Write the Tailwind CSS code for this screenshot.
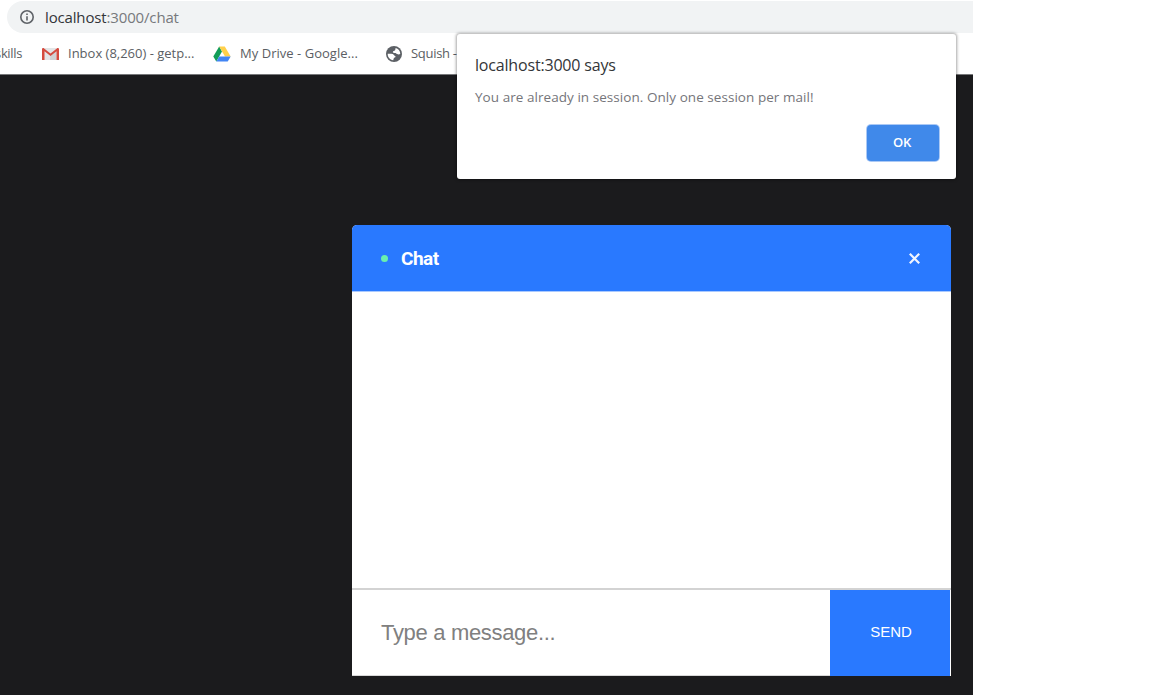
<!DOCTYPE html>
<html lang="en">
<head>
<meta charset="utf-8">
<title>Chat</title>
<script src="https://cdn.jsdelivr.net/npm/@tailwindcss/browser@4"></script>
</head>
<body class="bg-white overflow-hidden">
<div class="relative flex h-[695px] w-[973px] flex-col overflow-hidden bg-white font-['Open_Sans','Noto_Sans',sans-serif]">
  <!-- Browser toolbar -->
  <header class="flex h-[75px] shrink-0 flex-col border-b border-[#77787a] pt-px">
    <div class="ml-[7px] flex h-8 shrink-0 items-center rounded-l-full bg-[#f1f3f4] pl-[13px]">
      <svg class="size-[14px] shrink-0" viewBox="0 0 14 14" fill="none" stroke="#5f6368" stroke-width="1.6"><circle cx="7" cy="7" r="6.2"/><path d="M7 6.2v4.2M7 3.5v1.5"/></svg>
      <span class="ml-[11px] whitespace-nowrap text-[15px] tracking-[-0.15px] text-[#77797c]"><span class="text-[#333538]">localhost</span>:3000/chat</span>
    </div>
    <nav class="flex h-[41px] items-center whitespace-nowrap text-[13px] text-[#5b5e63]">
      <span class="flex w-[42px] shrink-0 justify-end pr-[20px] tracking-[-0.35px]">skills</span>
      <svg class="h-3 w-[17px] shrink-0" viewBox="0 0 17 12"><path fill="#e4e5e6" d="M1 0h15v12H1z"/><path fill="#d0d1d3" d="m8.5 6.5 5.5-4v9.500H8z"/><path fill="#d54b3f" d="M0 1.200C0 .2 1.300-.3 2.100.4l6.400 5 6.400-5c.8-.7 2.100-.2 2.100.8V12h-2.500V3.200l-6 4.700-6-4.700V12H0z"/></svg>
      <span class="ml-[9px] w-[145px] shrink-0">Inbox (8,260) - getp...</span>
      <svg class="h-4 w-[18px] shrink-0" viewBox="0 0 18 16"><path fill="#129d58" d="M6.200.5 9 5.500 3.300 15.500.3 10.500z"/><path fill="#ffd04b" d="M6.200.5h5.600l5.900 10H12z"/><path fill="#4285f4" d="M6.200 10.500h11.500l-3 5H3.300z"/></svg>
      <span class="ml-[9px] w-[146px] shrink-0 tracking-[0.03px]">My Drive - Google...</span>
      <svg class="size-4 shrink-0" viewBox="0 0 16 16"><circle cx="8" cy="8" r="8" fill="#5c6065"/><path fill="#fff" d="M1.700 7.800c1.500-.3 3.500-.2 5 .2 1.300.4 1.200 1.700 2.300 2 .9.300.6 1.300-.2 1.500-1.300.3-1 1.300-1.600 2.700-3.200-.3-5.600-3-5.500-6.400zM9.600 1.900c2.600.7 4.600 3 4.700 5.900-.9.9-2.200.8-3.200.2-.8-.5-1.200-1.200-2.500-1.100-1.500.1-2.300-.7-1.400-1.700.6-.7 1.700-.4 2-1.300.2-.7.300-1.300.4-2z"/></svg>
      <span class="ml-[9px] shrink-0 tracking-[-0.3px]">Squish -</span>
    </nav>
  </header>

  <!-- Page -->
  <main class="flex min-h-0 flex-1 justify-end bg-[#1b1b1d] pr-[22px] pt-[150px]">
    <section class="flex h-[451px] w-[599px] flex-col overflow-hidden rounded-t-[5px] bg-white font-['Roboto',sans-serif]">
      <div class="flex h-[66px] shrink-0 items-center bg-[#2979ff] pl-[29px] pr-[31px] text-white">
        <span class="size-[7px] rounded-full bg-[#69f0ae]"></span>
        <h1 class="ml-[13px] mt-0.5 text-[19px] font-bold leading-6 tracking-[-0.5px]">Chat</h1>
        <svg class="ml-auto mt-px size-[11px]" viewBox="0 0 11 11" stroke="#f0f5ff" stroke-width="2.200"><path d="m.8.8 9.400 9.400M10.200.8.800 10.200"/></svg>
      </div>
      <div class="flex-1 border-t border-[#a9c9ff]"></div>
      <form class="flex h-[88px] shrink-0 border-t-2 border-[#d3d3d3] font-['Liberation_Sans',sans-serif]">
        <div class="flex flex-1 items-center border-b border-[#d8d8d8] pl-[29px] text-[22px] tracking-[-0.32px] text-[#808080]">Type a message...</div>
        <button type="button" class="mr-px w-[120px] bg-[#2979ff] pb-0.5 pl-0.5 text-[15px] tracking-[-0.1px] text-white">SEND</button>
      </form>
    </section>
  </main>

  <!-- Alert dialog -->
  <div role="dialog" class="absolute left-[457px] top-[34px] flex h-[145px] w-[499px] flex-col rounded-[3px] bg-white pl-[18px] pr-[17px] pt-[19px] shadow-[0_0_3px_1px_rgba(0,0,0,0.35)]">
    <h2 class="text-[16px] leading-6 tracking-[-0.18px] text-[#333538]">localhost:3000 says</h2>
    <p class="mt-[10px] text-[13.500px] leading-5 tracking-[0.05px] text-[#75757a]">You are already in session. Only one session per mail!</p>
    <button type="button" class="ml-auto mt-[18px] h-[36px] w-[72px] rounded-[4px] bg-[#4089ea] pr-0.5 text-[13px] font-semibold tracking-[-0.2px] text-white shadow-[0_0_0_1px_#abc9f5]">OK</button>
  </div>
</div>
</body>
</html>
